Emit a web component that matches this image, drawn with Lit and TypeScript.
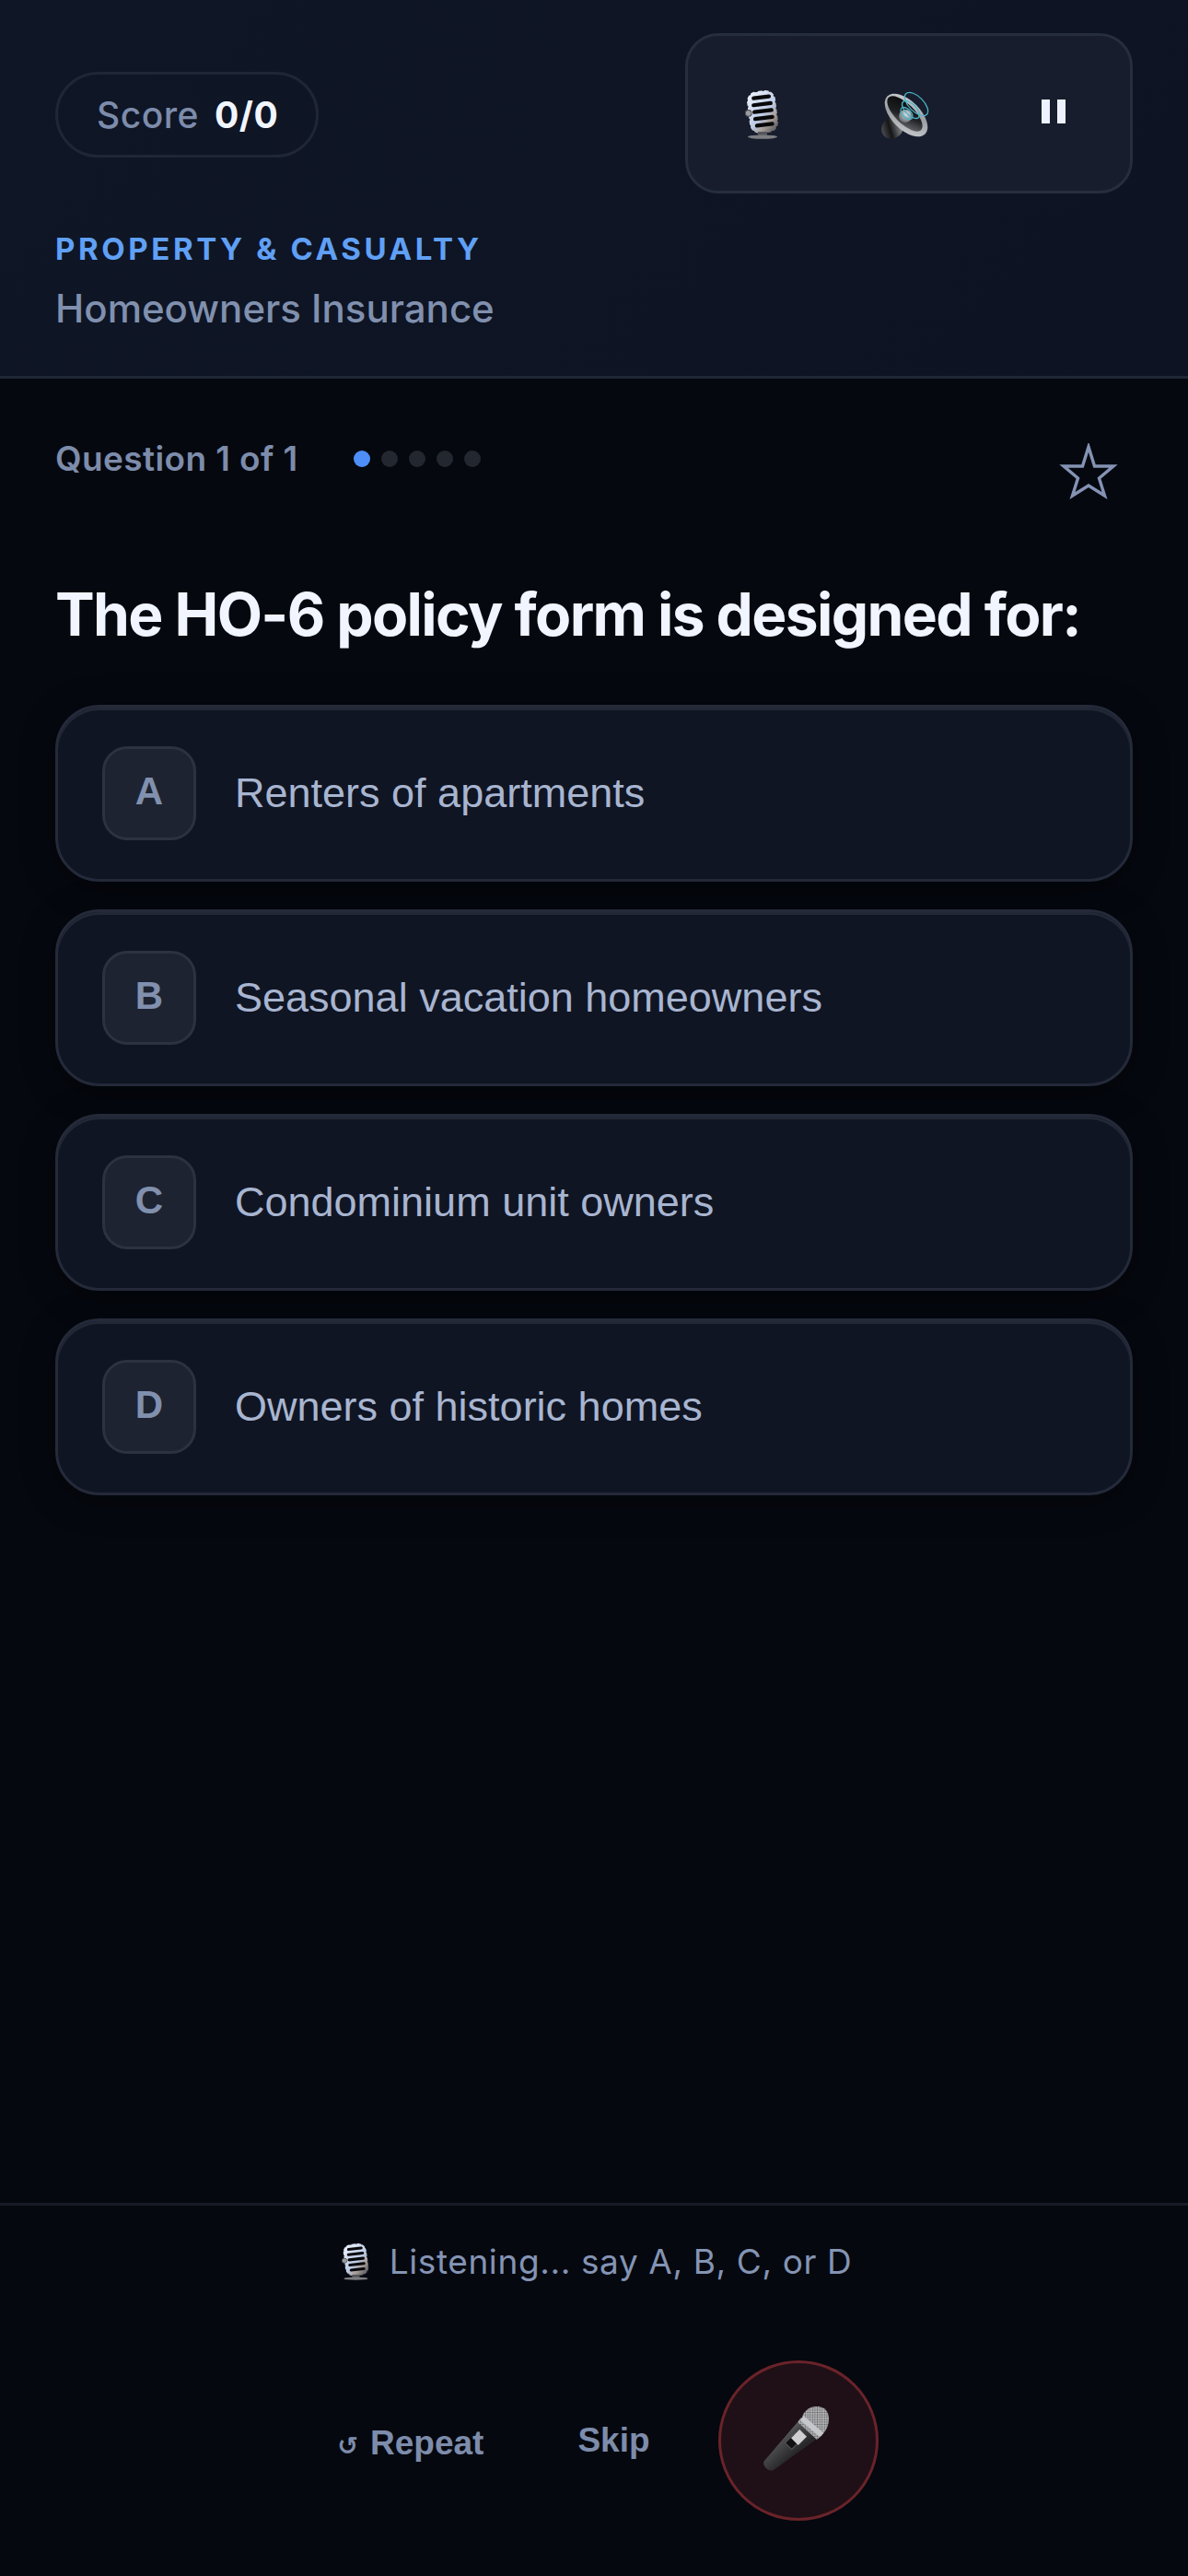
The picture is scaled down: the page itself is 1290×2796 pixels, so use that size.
import { LitElement, html, css, svg } from 'lit';
import { customElement } from 'lit/decorators.js';

const OPTIONS = [
  { key: 'A', text: 'Renters of apartments' },
  { key: 'B', text: 'Seasonal vacation homeowners' },
  { key: 'C', text: 'Condominium unit owners' },
  { key: 'D', text: 'Owners of historic homes' },
];

// studio microphone emoji, tilted slightly like the reference
const studioMic = (w: number, h: number) => svg`
  <svg width=${w} height=${h} viewBox="0 0 37 53" preserveAspectRatio="none" aria-hidden="true">
    <defs>
      <linearGradient id="chrome" x1="0.1" y1="0" x2="0.7" y2="1">
        <stop offset="0" stop-color="#eef3fd" />
        <stop offset="0.6" stop-color="#bccbe6" />
        <stop offset="0.82" stop-color="#a59a94" />
        <stop offset="1" stop-color="#68686c" />
      </linearGradient>
    </defs>
    <g transform="rotate(-7 19 23)">
      <rect x="3.5" y="0.5" width="31" height="46" rx="11" fill="url(#chrome)" />
      <rect x="3.5" y="0.5" width="31" height="46" rx="11" fill="none" stroke="#17171a"
        stroke-width="1.4" stroke-dasharray="2 5" />
      <g fill="#08080a">
        <rect x="9" y="5.5" width="21" height="4.2" rx="2.1" />
        <rect x="8" y="13" width="23" height="4.2" rx="2.1" />
        <rect x="8" y="20.5" width="23" height="4.2" rx="2.1" />
        <rect x="8" y="28" width="23" height="4.2" rx="2.1" />
        <rect x="9" y="35.5" width="21" height="4.2" rx="2.1" />
      </g>
      <circle cx="3.6" cy="23" r="3.4" fill="#9a9ca1" stroke="#4f5055" />
    </g>
    <rect x="14" y="45" width="10" height="5" fill="#55565a" />
    <ellipse cx="19" cy="50.6" rx="16" ry="2.2" fill="#7d7e82" />
  </svg>
`;

const speaker = svg`
  <svg width="54" height="53" viewBox="0 0 54 53" aria-hidden="true">
    <defs>
      <linearGradient id="rim" x1="0" y1="0" x2="1" y2="1">
        <stop offset="0" stop-color="#d6d9dd" />
        <stop offset="0.5" stop-color="#9b9ea2" />
        <stop offset="1" stop-color="#d0d3d7" />
      </linearGradient>
      <linearGradient id="cone" x1="0" y1="0" x2="1" y2="1">
        <stop offset="0" stop-color="#060607" />
        <stop offset="0.55" stop-color="#202124" />
        <stop offset="1" stop-color="#7b7e82" />
      </linearGradient>
      <radialGradient id="dome" cx="0.6" cy="0.35" r="0.75">
        <stop offset="0" stop-color="#dde3e7" />
        <stop offset="1" stop-color="#5a5d61" />
      </radialGradient>
      <linearGradient id="magnet" x1="0" y1="0" x2="1" y2="0.4">
        <stop offset="0" stop-color="#606265" />
        <stop offset="0.5" stop-color="#151517" />
        <stop offset="1" stop-color="#8a8c8f" />
      </linearGradient>
    </defs>
    <ellipse cx="13" cy="41" rx="12.5" ry="11" transform="rotate(-40 13 41)" fill="url(#magnet)" />
    <ellipse cx="28" cy="27" rx="29" ry="15.5" transform="rotate(45 28 27)" fill="url(#rim)" />
    <ellipse cx="26.5" cy="25.5" rx="25" ry="10.5" transform="rotate(45 26.5 25.5)" fill="url(#cone)" />
    <circle cx="27" cy="28" r="7" fill="url(#dome)" />
    <g fill="none" stroke="#4bb3c6" stroke-width="1.3">
      <ellipse cx="39" cy="15" rx="16" ry="8" transform="rotate(45 39 15)" />
      <ellipse cx="33" cy="21" rx="12" ry="6" transform="rotate(45 33 21)" />
      <ellipse cx="28.5" cy="25" rx="8" ry="4.5" transform="rotate(45 28.5 25)" />
    </g>
  </svg>
`;

const handMic = svg`
  <svg width="71" height="70" viewBox="0 0 71 70" aria-hidden="true">
    <defs>
      <linearGradient id="body" x1="0.2" y1="0.2" x2="0.62" y2="0.62">
        <stop offset="0" stop-color="#77787a" />
        <stop offset="0.45" stop-color="#48494b" />
        <stop offset="1" stop-color="#272729" />
      </linearGradient>
      <pattern id="mesh" width="2.6" height="2.6" patternUnits="userSpaceOnUse">
        <rect width="2.6" height="2.6" fill="#b4b5b8" />
        <circle cx="1.3" cy="1.3" r="0.8" fill="#5c5c5f" />
      </pattern>
    </defs>
    <path d="M37 17 L58 35 L11 69 Q6 71 2 66 Q-1 62 1 59 Z" fill="url(#body)" />
    <path d="M37 17 L41 12 L64 31 L58 36 Z" fill="url(#mesh)" />
    <path d="M42 11 Q46 1 56 0 Q70 -1 71 13 Q71 24 64 30 Z" fill="url(#mesh)" />
    <path d="M40 15 L43.5 10 L65.5 29 L61 33 Z" fill="#c6c7ca" />
    <rect x="27" y="31" width="10" height="14" transform="rotate(45 32 38)" fill="#111113" stroke="#55565a" />
    <rect x="33" y="27" width="11" height="13" transform="rotate(45 38.5 33.5)" fill="#d0d0d3" />
  </svg>
`;

@customElement('app-root')
export class AppRoot extends LitElement {
  static styles = css`
    :host {
      display: flex;
      flex-direction: column;
      height: 2796px;
      background: #05080f;
      font-family: Inter, 'Liberation Sans', sans-serif;
      box-sizing: border-box;
    }
    .header {
      height: 411px;
      flex: none;
      box-sizing: border-box;
      padding: 36px 60px 0;
      background: linear-gradient(135deg, #0f1626, #0d1322);
      border-bottom: 3px solid #1f2635;
    }
    .top {
      display: flex;
      justify-content: space-between;
      align-items: center;
    }
    .score {
      display: flex;
      align-items: center;
      height: 93px;
      margin-top: 2px;
      box-sizing: border-box;
      padding: 0 41px 0 42px;
      gap: 17px;
      border: 3px solid #1f2635;
      border-radius: 47px;
      font-size: 39px;
      font-weight: 500;
      letter-spacing: 0.5px;
      color: #7d8cab;
    }
    .score b {
      color: #f1f5ff;
      font-weight: 700;
    }
    .controls {
      display: flex;
      width: 486px;
      height: 174px;
      box-sizing: border-box;
      padding-left: 62px;
      gap: 110px;
      align-items: center;
      background: #171d2c;
      border: 3px solid #262d3c;
      border-radius: 36px;
    }
    .icon {
      display: flex;
      margin-top: 3px;
    }
    .pause {
      display: flex;
      gap: 8px;
      margin: -5px 0 0 11px;
    }
    .pause i {
      display: block;
      width: 9px;
      height: 26px;
      background: #eef1fe;
    }
    .category {
      margin-top: 42px;
      font-size: 33px;
      line-height: 36px;
      font-weight: 700;
      letter-spacing: 3.6px;
      color: #60a0f5;
    }
    .topic {
      margin-top: 23px;
      font-size: 42px;
      line-height: 48px;
      font-weight: 500;
      color: #8090ae;
    }
    .main {
      flex: 1;
      padding: 0 60px;
    }
    .progress {
      display: flex;
      align-items: flex-start;
      justify-content: space-between;
      height: 156px;
      padding-top: 69px;
      box-sizing: border-box;
    }
    .count {
      display: flex;
      align-items: center;
      gap: 60px;
      font-size: 37px;
      line-height: 36px;
      font-weight: 600;
      letter-spacing: 0.4px;
      color: #7d8cab;
    }
    .dots {
      display: flex;
      gap: 12px;
    }
    .dots i {
      width: 18px;
      height: 18px;
      border-radius: 50%;
      background: #23272f;
    }
    .dots i.on {
      background: #4d8ef8;
    }
    .star {
      margin: 1px 16px 0 0;
    }
    h1 {
      margin: 58px 0 0;
      font-size: 64px;
      line-height: 84px;
      font-weight: 700;
      letter-spacing: -1.6px;
      white-space: nowrap;
      color: #f1f5ff;
    }
    .options {
      display: flex;
      flex-direction: column;
      gap: 30px;
      margin-top: 56px;
    }
    .option {
      display: flex;
      align-items: center;
      gap: 42px;
      height: 192px;
      box-sizing: border-box;
      padding: 0 48px;
      background: #101523;
      border: 3px solid #242a39;
      border-radius: 48px;
      box-shadow: inset 0 3px 0 #222835, 0 6px 36px rgba(0, 0, 0, 0.4);
      font-family: 'Liberation Sans', Arial, sans-serif;
      font-size: 45px;
      color: #a8b5d0;
    }
    .key {
      display: flex;
      align-items: center;
      justify-content: center;
      width: 102px;
      height: 102px;
      padding-bottom: 4px;
      box-sizing: border-box;
      background: #1e2331;
      border: 3px solid #2c3240;
      border-radius: 27px;
      font-size: 42px;
      font-weight: 700;
      color: #8090ae;
    }
    .footer {
      flex: none;
      height: 405px;
      box-sizing: border-box;
      border-top: 3px solid #171b25;
    }
    .status {
      display: flex;
      justify-content: center;
      align-items: center;
      gap: 22px;
      margin-top: 31px;
      padding-left: 6px;
      font-size: 37px;
      line-height: 60px;
      letter-spacing: 0.6px;
      color: #8494b4;
    }
    .actions {
      display: flex;
      align-items: center;
      justify-content: center;
      margin-top: 77px;
      padding-left: 30px;
    }
    .btn {
      font-family: 'Liberation Sans', Arial, sans-serif;
      font-size: 37px;
      font-weight: 700;
      color: #7d8cab;
    }
    .repeat {
      display: flex;
      align-items: baseline;
      gap: 13px;
      margin-top: 6px;
    }
    .repeat small {
      font-family: 'DejaVu Sans', sans-serif;
      font-size: 27px;
      font-weight: 700;
    }
    .skip {
      margin: 0 74px 0 102px;
    }
    .mic {
      display: flex;
      align-items: center;
      justify-content: center;
      width: 174px;
      height: 174px;
      padding: 0 4px 4px 0;
      box-sizing: border-box;
      background: #1f1017;
      border: 3px solid #6a2329;
      border-radius: 50%;
    }
  `;

  render() {
    return html`
      <div class="header">
        <div class="top">
          <div class="score">Score <b>0/0</b></div>
          <div class="controls">
            <span class="icon">${studioMic(37, 53)}</span>
            <span class="icon">${speaker}</span>
            <span class="pause"><i></i><i></i></span>
          </div>
        </div>
        <div class="category">PROPERTY &amp; CASUALTY</div>
        <div class="topic">Homeowners Insurance</div>
      </div>
      <div class="main">
        <div class="progress">
          <div class="count">
            Question 1 of 1
            <span class="dots">
              <i class="on"></i><i></i><i></i><i></i><i></i>
            </span>
          </div>
          <svg class="star" width="65" height="62" viewBox="0 0 65 62" aria-hidden="true">
            <path
              d="M33 4 L39.5 25 L60 25 L44.5 38 L50.5 57 L33 46 L15.5 57 L21.5 38 L6 25 L26.5 25 Z"
              fill="none"
              stroke="#8493b4"
              stroke-width="3.4"
              stroke-miterlimit="10"
            />
          </svg>
        </div>
        <h1>The HO-6 policy form is designed for:</h1>
        <div class="options">
          ${OPTIONS.map(
            (o) => html`
              <div class="option">
                <div class="key">${o.key}</div>
                <div>${o.text}</div>
              </div>
            `
          )}
        </div>
      </div>
      <div class="footer">
        <div class="status">${studioMic(30, 40)} Listening... say A, B, C, or D</div>
        <div class="actions">
          <div class="btn repeat"><small>↺</small> Repeat</div>
          <div class="btn skip">Skip</div>
          <div class="mic">${handMic}</div>
        </div>
      </div>
    `;
  }
}
